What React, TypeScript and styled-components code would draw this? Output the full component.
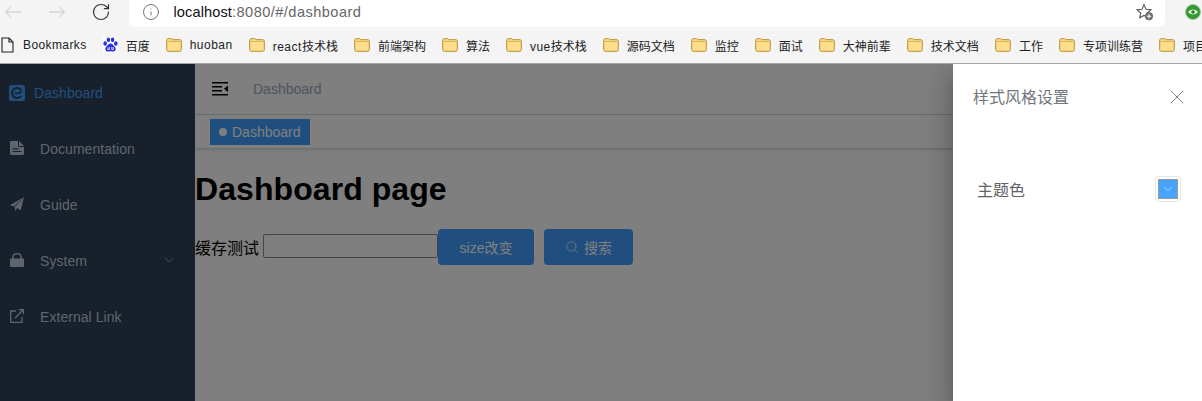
import React from "react";
import styled, { createGlobalStyle } from "styled-components";
import { RotateCw, Info, Search, X, ChevronDown } from "lucide-react";

const GlobalStyle = createGlobalStyle`
  html, body {
    margin: 0;
    padding: 0;
    height: 401px;
    overflow: hidden;
    background: #fff;
    font-family: "Liberation Sans", "Noto Sans CJK SC", sans-serif;
  }
`;

const Chrome = styled.header`
  height: 64px;
  background: #f4f4f4;
  box-sizing: border-box;
  border-bottom: 1px solid #a8a8a8;
`;

const Toolbar = styled.div`
  display: flex;
  align-items: flex-start;
  height: 27px;
  padding-left: 5px;
`;

const NavButton = styled.span<{ $color: string }>`
  display: flex;
  justify-content: center;
  align-items: center;
  flex: none;
  width: 16px;
  height: 16px;
  margin-top: 4px;
  margin-right: 28px;
  color: ${(p) => p.$color};
  svg {
    flex: none;
  }
`;

const AddressBar = styled.div`
  display: flex;
  align-items: center;
  flex: none;
  width: 1036px;
  height: 27px;
  margin-left: -8px;
  padding: 0 11px 3px 12.5px;
  box-sizing: border-box;
  background: #fff;
  border-radius: 0 0 6px 6px;
`;

const Url = styled.span`
  margin-left: 14px;
  font-size: 14.6px;
  letter-spacing: 0.45px;
  color: #666;
  b {
    font-weight: 400;
    letter-spacing: 0.1px;
    color: #111;
  }
`;

const StarSlot = styled.span`
  display: flex;
  margin-left: auto;
`;

const Extension = styled.span`
  display: flex;
  margin: 4px 0 0 20px;
`;

const BookmarkBar = styled.nav`
  display: flex;
  align-items: center;
  gap: 16px;
  height: 36px;
  padding-left: 1px;
  white-space: nowrap;
  overflow: hidden;
  font-size: 12px;
  color: #222;
`;

const Bookmark = styled.span<{ $gap?: number }>`
  display: flex;
  align-items: center;
  gap: ${(p) => p.$gap ?? 8}px;
  flex: none;
`;

const Latin = styled.span<{ $tight?: boolean }>`
  letter-spacing: ${(p) => (p.$tight ? 0.4 : 0.5)}px;
`;

const Page = styled.div`
  position: relative;
  display: flex;
  height: 337px;
  overflow: hidden;
`;

const Sidebar = styled.aside`
  flex: none;
  width: 195px;
  padding-top: 1px;
  background: #304156;
`;

const MenuItem = styled.div<{ $active?: boolean }>`
  display: flex;
  align-items: center;
  height: 56px;
  padding: 0 20px 0 ${(p) => (p.$active ? 9 : 10)}px;
  font-size: 14px;
  letter-spacing: 0.05px;
  color: ${(p) => (p.$active ? "#409eff" : "#bfcbd9")};
`;

const MenuIcon = styled.span<{ $active?: boolean }>`
  display: flex;
  width: 16px;
  margin-right: ${(p) => (p.$active ? 9 : 14)}px;
  margin-bottom: ${(p) => (p.$active ? 0 : 2)}px;
`;

const MenuArrow = styled.span`
  display: flex;
  margin-left: auto;
  margin-right: -2px;
  margin-top: -3px;
`;

const Main = styled.main`
  flex: 1;
  min-width: 0;
  background: #fff;
`;

const Navbar = styled.div`
  display: flex;
  align-items: center;
  height: 50px;
  padding-left: 17px;
  border-bottom: 1px solid #d8dce5;
`;

const Crumb = styled.span`
  margin-left: 25px;
  font-size: 14px;
  color: #97a8be;
`;

const TagsBar = styled.div`
  display: flex;
  align-items: center;
  height: 34px;
  padding-left: 15px;
  box-shadow: 0 1px 3px 0 rgba(0, 0, 0, 0.12), 0 0 3px 0 rgba(0, 0, 0, 0.04);
  border-bottom: 1px solid #d8dce5;
  box-sizing: border-box;
`;

const Tag = styled.span`
  display: flex;
  align-items: center;
  height: 26px;
  padding: 0 9px;
  font-size: 14px;
  color: #fff;
  background: #409eff;
  &::before {
    content: "";
    width: 8px;
    height: 8px;
    margin-right: 5px;
    border-radius: 50%;
    background: #fff;
  }
`;

const Heading = styled.h1`
  margin: 22px 0 21px;
  font-size: 32px;
  line-height: 37px;
  font-weight: 700;
  letter-spacing: 0.07px;
  color: #000;
`;

const FormRow = styled.div`
  display: flex;
  align-items: center;
  font-size: 16px;
  color: #000;
`;

const CacheInput = styled.input`
  width: 175px;
  height: 24px;
  margin: 0 0 2px 4px;
  padding: 0;
  box-sizing: border-box;
  border: 1px solid #8a8a8a;
  border-radius: 2px;
  background: #fff;
`;

const Button = styled.button<{ $w: number }>`
  display: flex;
  align-items: center;
  justify-content: center;
  gap: 5px;
  width: ${(p) => p.$w}px;
  height: 36px;
  margin-right: 10px;
  padding: 0;
  border: 0;
  border-radius: 4px;
  font: inherit;
  font-size: 14px;
  color: #fff;
  background: #409eff;
`;

const Overlay = styled.div`
  position: absolute;
  inset: 0;
  background: rgba(0, 0, 0, 0.5);
`;

const Drawer = styled.section`
  position: absolute;
  top: 0;
  right: 0;
  bottom: 0;
  width: 249px;
  background: #fff;
  box-shadow: 0 8px 10px -5px rgba(0, 0, 0, 0.2), 0 16px 24px 2px rgba(0, 0, 0, 0.14),
    0 6px 30px 5px rgba(0, 0, 0, 0.12);
`;

const DrawerHeader = styled.div`
  display: flex;
  align-items: center;
  justify-content: space-between;
  height: 24px;
  padding: 21px 13px 0 21px;
  font-size: 16px;
  color: #72767b;
  line-height: 22px;
`;

const DrawerTitle = styled.span`
  margin: 1px 0 0 -1px;
`;

const Setting = styled.div`
  display: flex;
  align-items: center;
  justify-content: space-between;
  margin-top: 67px;
  padding: 0 21px 0 24px;
  font-size: 16px;
  color: #606266;
`;

const Swatch = styled.span`
  display: flex;
  width: 26px;
  height: 26px;
  box-sizing: border-box;
  padding: 2px;
  border: 1px solid #e6e6e6;
  border-radius: 4px;
`;

const SwatchFill = styled.span`
  display: flex;
  align-items: center;
  justify-content: center;
  width: 100%;
  height: 100%;
  background: #46a3ff;
  border: 1px solid #999;
  box-sizing: border-box;
`;

const BackArrow = ({ flip }: { flip?: boolean }) => (
  <svg width="16" height="12" viewBox="0 0 16 12" fill="none" stroke="currentColor" strokeWidth="1">
    {flip ? <path d="M0 6h15.300M10 .6L15.400 6 10 11.400" /> : <path d="M16 6H.7M6 .6L.6 6 6 11.400" />}
  </svg>
);

const Folder = () => (
  <svg width="16" height="14" viewBox="0 0 16 14">
    <path
      d="M.7 2.500C.7 1.400 1.300.7 2.400.7h3.300c.7 0 1 .5 1.500 1h6.500c1 0 1.600.6 1.600 1.500v8.400c0 1-.6 1.700-1.600 1.700H2.400c-1 0-1.700-.6-1.700-1.700z"
      fill="#fcdf8d"
      stroke="#bb8c2c"
    />
    <path d="M1.200 3.400h13.600" stroke="#d9ae50" strokeWidth="1" />
  </svg>
);

const PageIcon = () => (
  <svg width="13" height="16" viewBox="0 0 13 16" fill="none" stroke="#222" strokeWidth="1.100">
    <path d="M1 1h7l4 4v10H1z" />
    <path d="M8 1v4h4" />
  </svg>
);

const Paw = () => (
  <svg width="15" height="16" viewBox="0 0 15 16" fill="#2932e1">
    <rect width="15" height="16" fill="#fff" />
    <ellipse cx="2.200" cy="6.500" rx="1.800" ry="2.300" />
    <ellipse cx="5.400" cy="2.800" rx="1.700" ry="2.400" />
    <ellipse cx="9.600" cy="2.800" rx="1.700" ry="2.400" />
    <ellipse cx="12.800" cy="6.500" rx="1.800" ry="2.300" />
    <path d="M7.500 6.500c2.200 0 2.800 2.200 4.300 3.300 1.600 1.300 1 4.800-1.600 4.800-1.200 0-1.800-.4-2.700-.4s-1.500.4-2.700.4c-2.600 0-3.200-3.500-1.600-4.800C4.700 8.700 5.300 6.500 7.500 6.500z" />
    <path d="M4.800 10.500v2h1.600v-2.500M8.800 10v2.500h1.500v-2.500" fill="none" stroke="#fff" strokeWidth="0.800" />
  </svg>
);

const Star = () => (
  <svg width="18" height="18" viewBox="0 0 18 18">
    <path
      d="M8 1.600l2 4.600 5 .5-3.700 3.300 1 4.800L8 12.400 3.700 14.800l1-4.800L1 6.700l5-.5z"
      fill="none"
      stroke="#555"
      strokeWidth="1.100"
    />
    <circle cx="13" cy="13.300" r="4" fill="#6b6b6b" />
    <path d="M13 11v4.600M10.700 13.300h4.600" stroke="#fff" strokeWidth="1.100" />
  </svg>
);

const EyeExt = () => (
  <svg width="16" height="16" viewBox="0 0 16 16">
    <circle cx="8" cy="8" r="7.500" fill="#2e9c2e" stroke="#b9b9b9" />
    <path d="M3 8c2.500-3.300 7.500-3.300 10 0-2.500 3.300-7.500 3.300-10 0z" fill="#dff3d8" />
    <circle cx="8" cy="8" r="1.800" fill="#2e7c2e" />
  </svg>
);

const Hamburger = () => (
  <svg width="16" height="14" viewBox="0 0 16 14" fill="#000">
    <rect y="0" width="16" height="1.500" />
    <rect y="4" width="10" height="1.500" />
    <rect y="8" width="10" height="1.500" />
    <rect y="12" width="16" height="1.500" />
    <path d="M16 3.500v6.500l-4-3.200z" />
  </svg>
);

const DashboardIcon = () => (
  <svg width="16" height="16" viewBox="0 0 16 16">
    <rect width="16" height="16" rx="2.500" fill="currentColor" />
    <path d="M12.300 5.400A5 5 0 1 0 12 11" fill="none" stroke="#304156" strokeWidth="2" />
    <path d="M5.500 8.200h4.300l2.700-1.400" fill="none" stroke="#304156" strokeWidth="1.600" />
  </svg>
);

const DocIcon = () => (
  <svg width="14" height="14" viewBox="0 0 14 14">
    <path d="M1 0h8l5 5v7.500c0 .8-.6 1.500-1.500 1.500h-11C.6 14 0 13.300 0 12.500V1c0-.6.4-1 1-1z" fill="#bfcbd9" />
    <path d="M8.500 0v5.500H14" fill="none" stroke="#304156" strokeWidth="1" />
    <path d="M2.500 7.800h6M2.500 10.500h9" stroke="#304156" strokeWidth="1.200" />
  </svg>
);

const PlaneIcon = () => (
  <svg width="14" height="14" viewBox="0 0 14 14" fill="#bfcbd9">
    <path d="M14 0L0 8.200l3.900 1.200z" />
    <path d="M14 0L4.700 10l.6 4 1.900-2.900 3.500 2.100z" />
  </svg>
);

const LockIcon = () => (
  <svg width="14" height="14" viewBox="0 0 14 14">
    <path d="M2.800 7V4.800a4.200 4.200 0 0 1 8.400 0V7" fill="none" stroke="#bfcbd9" strokeWidth="1.500" />
    <rect y="5.500" width="14" height="8.500" rx="0.800" fill="#bfcbd9" />
  </svg>
);

const LinkIcon = () => (
  <svg width="14" height="14" viewBox="0 0 14 14" fill="none" stroke="#bfcbd9" strokeWidth="1.300">
    <path d="M6 2H.7v11.300H12V8" />
    <path d="M5 9.200L13 1M8.800.7h4.600v4.600" />
  </svg>
);

const folders = [
  ["huoban", ""],
  ["react", "技术栈"],
  ["", "前端架构"],
  ["", "算法"],
  ["vue", "技术栈"],
  ["", "源码文档"],
  ["", "监控"],
  ["", "面试"],
  ["", "大神前辈"],
  ["", "技术文档"],
  ["", "工作"],
  ["", "专项训练营"],
  ["", "项目"],
];

export default function App() {
  return (
    <>
      <GlobalStyle />
      <Chrome>
        <Toolbar>
          <NavButton $color="#c4c4c4">
            <BackArrow />
          </NavButton>
          <NavButton $color="#c4c4c4">
            <BackArrow flip />
          </NavButton>
          <NavButton $color="#333">
            <RotateCw size={20} strokeWidth={1.400} />
          </NavButton>
          <AddressBar>
            <Info size={18} strokeWidth={1.200} color="#666" />
            <Url>
              <b>localhost</b>:8080/#/dashboard
            </Url>
            <StarSlot>
              <Star />
            </StarSlot>
          </AddressBar>
          <Extension>
            <EyeExt />
          </Extension>
        </Toolbar>
        <BookmarkBar>
          <Bookmark $gap={9}>
            <PageIcon />
            <Latin $tight>Bookmarks</Latin>
          </Bookmark>
          <Bookmark>
            <Paw />
            百度
          </Bookmark>
          {folders.map(([latin, cjk]) => (
            <Bookmark key={latin + cjk}>
              <Folder />
              <span>
                {latin && <Latin>{latin}</Latin>}
                {cjk}
              </span>
            </Bookmark>
          ))}
        </BookmarkBar>
      </Chrome>
      <Page>
        <Sidebar>
          <MenuItem $active>
            <MenuIcon $active>
              <DashboardIcon />
            </MenuIcon>
            Dashboard
          </MenuItem>
          <MenuItem>
            <MenuIcon>
              <DocIcon />
            </MenuIcon>
            Documentation
          </MenuItem>
          <MenuItem>
            <MenuIcon>
              <PlaneIcon />
            </MenuIcon>
            Guide
          </MenuItem>
          <MenuItem>
            <MenuIcon>
              <LockIcon />
            </MenuIcon>
            System
            <MenuArrow>
              <ChevronDown size={16} strokeWidth={0.900} />
            </MenuArrow>
          </MenuItem>
          <MenuItem>
            <MenuIcon>
              <LinkIcon />
            </MenuIcon>
            External Link
          </MenuItem>
        </Sidebar>
        <Main>
          <Navbar>
            <Hamburger />
            <Crumb>Dashboard</Crumb>
          </Navbar>
          <TagsBar>
            <Tag>Dashboard</Tag>
          </TagsBar>
          <Heading>Dashboard page</Heading>
          <FormRow>
            缓存测试
            <CacheInput />
            <Button $w={96}>size改变</Button>
            <Button $w={89}>
              <Search size={14} strokeWidth={1.200} />
              搜索
            </Button>
          </FormRow>
        </Main>
        <Overlay />
        <Drawer>
          <DrawerHeader>
            <DrawerTitle>样式风格设置</DrawerTitle>
            <X size={24} strokeWidth={0.900} />
          </DrawerHeader>
          <Setting>
            主题色
            <Swatch>
              <SwatchFill>
                <ChevronDown size={14} strokeWidth={1} color="#fff" />
              </SwatchFill>
            </Swatch>
          </Setting>
        </Drawer>
      </Page>
    </>
  );
}
